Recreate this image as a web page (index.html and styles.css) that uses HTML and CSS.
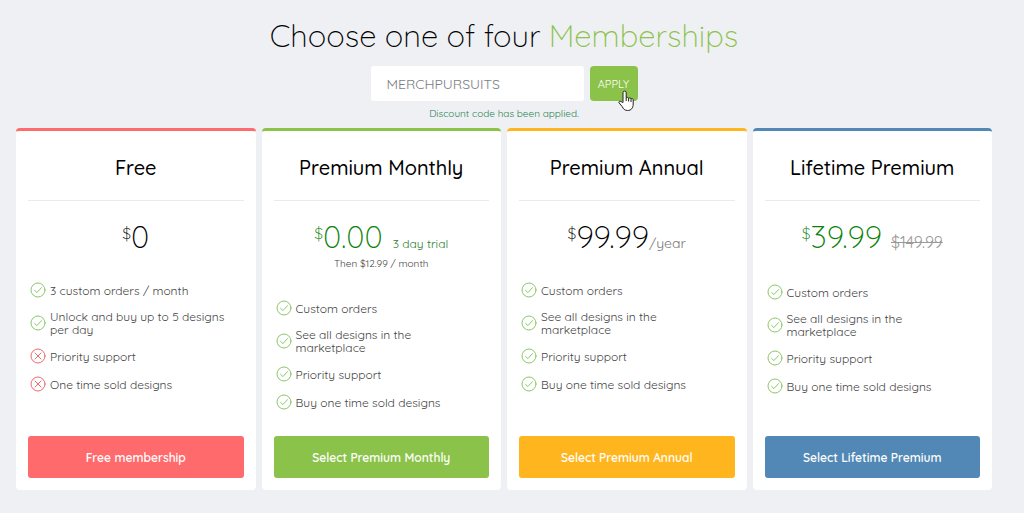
FILE: index.html
```html
<!DOCTYPE html>
<html lang="en">
<head>
  <meta charset="UTF-8" />
  <meta name="viewport" content="width=device-width, initial-scale=1.0"/>
  <title>Memberships</title>
  <link rel="stylesheet" href="styles.css">
</head>
<body>
  <svg class="sprite" aria-hidden="true">
    <symbol id="check" viewBox="0 0 16 16">
      <circle cx="8" cy="8" r="7" />
      <path d="M4.600 8.400l2.300 2.200 4.600-5" />
    </symbol>
    <symbol id="cross" viewBox="0 0 16 16">
      <circle cx="8" cy="8" r="7" />
      <path d="M5 5l6 6M11 5l-6 6" />
    </symbol>
  </svg>

  <h1>Choose one of four <span>Memberships</span></h1>

  <form class="discount">
    <input type="text" id="code" aria-label="Discount code" value="MERCHPURSUITS" />
    <div class="apply-wrap">
      <button type="button" class="apply">APPLY</button>
      <svg class="pointer" viewBox="0 0 16 22" aria-hidden="true">
        <path d="M5 12.500V2.700a1.600 1.600 0 0 1 3.200 0V8a1.300 1.300 0 0 1 2.400.5 1.300 1.300 0 0 1 2.400.6 1.200 1.200 0 0 1 2.200.8V14c0 4-2 6.500-5.600 6.500-3 0-4.300-1.600-5.300-3.800L1 12.800c-.6-1.300 1-2.200 2-1.200z" />
        <path d="M8.200 8v3M10.600 8.500V11.500M13 9.100V12" />
      </svg>
    </div>
  </form>
  <p class="message">Discount code has been applied.</p>

  <main class="plans">
    <section class="plan free">
      <h2>Free</h2>
      <div class="price"><sup>$</sup><span class="amount">0</span></div>
      <ul>
        <li><svg class="yes"><use href="#check" /></svg><span>3 custom orders / month</span></li>
        <li><svg class="yes"><use href="#check" /></svg><span>Unlock and buy up to 5 designs<br>per day</span></li>
        <li><svg class="no"><use href="#cross" /></svg><span>Priority support</span></li>
        <li><svg class="no"><use href="#cross" /></svg><span>One time sold designs</span></li>
      </ul>
      <button type="button">Free membership</button>
    </section>

    <section class="plan monthly">
      <h2>Premium Monthly</h2>
      <div class="price sale"><sup>$</sup><span class="amount">0.00</span><span class="trial">3 day trial</span></div>
      <p class="then">Then $12.99 / month</p>
      <ul>
        <li><svg class="yes"><use href="#check" /></svg><span>Custom orders</span></li>
        <li><svg class="yes"><use href="#check" /></svg><span>See all designs in the<br>marketplace</span></li>
        <li><svg class="yes"><use href="#check" /></svg><span>Priority support</span></li>
        <li><svg class="yes"><use href="#check" /></svg><span>Buy one time sold designs</span></li>
      </ul>
      <button type="button">Select Premium Monthly</button>
    </section>

    <section class="plan annual">
      <h2>Premium Annual</h2>
      <div class="price"><sup>$</sup><span class="amount">99.99</span><span class="period">/year</span></div>
      <ul>
        <li><svg class="yes"><use href="#check" /></svg><span>Custom orders</span></li>
        <li><svg class="yes"><use href="#check" /></svg><span>See all designs in the<br>marketplace</span></li>
        <li><svg class="yes"><use href="#check" /></svg><span>Priority support</span></li>
        <li><svg class="yes"><use href="#check" /></svg><span>Buy one time sold designs</span></li>
      </ul>
      <button type="button">Select Premium Annual</button>
    </section>

    <section class="plan lifetime">
      <h2>Lifetime Premium</h2>
      <div class="price sale"><sup>$</sup><span class="amount">39.99</span><del>$149.99</del></div>
      <ul>
        <li><svg class="yes"><use href="#check" /></svg><span>Custom orders</span></li>
        <li><svg class="yes"><use href="#check" /></svg><span>See all designs in the<br>marketplace</span></li>
        <li><svg class="yes"><use href="#check" /></svg><span>Priority support</span></li>
        <li><svg class="yes"><use href="#check" /></svg><span>Buy one time sold designs</span></li>
      </ul>
      <button type="button">Select Lifetime Premium</button>
    </section>
  </main>
</body>
</html>
```
FILE: styles.css
```css
* {
  box-sizing: border-box;
}
body {
  font-family: Quicksand, Lato, sans-serif;
  background: #eff0f4;
  color: #000;
  margin: 0;
  padding: 16px 32px 16px 16px;
}
.sprite {
  display: none;
}
h1 {
  margin: 0 0 10px;
  font-size: 31px;
  line-height: 40px;
  font-weight: 300;
  text-align: center;
}
h1 span {
  color: #8bc34a;
}
.discount {
  display: flex;
  justify-content: center;
  gap: 6px;
}
.discount input {
  width: 213px;
  height: 35px;
  padding: 0 16px;
  border: none;
  border-radius: 3px;
  background: #fff;
  color: #7b7e84;
  font-family: inherit;
  font-size: 14px;
}
.apply-wrap {
  position: relative;
}
.apply {
  width: 48px;
  height: 35px;
  padding: 0;
  border: none;
  border-radius: 4px;
  background: #8bc34a;
  color: #fff;
  font-family: inherit;
  font-size: 11px;
  cursor: pointer;
}
.pointer {
  position: absolute;
  left: 28px;
  top: 24px;
  width: 16px;
  height: 22px;
  fill: #fff;
  stroke: #222;
  stroke-linejoin: round;
}
.message {
  margin: 5px 0 6px;
  font-size: 10px;
  line-height: 16px;
  text-align: center;
  color: #2a854f;
}
.plans {
  display: grid;
  grid-template-columns: repeat(4, 1fr);
  gap: 6px;
}
.plan {
  display: flex;
  flex-direction: column;
  padding: 0 12px 12px;
  background: #fff;
  border-top: 3px solid;
  border-radius: 4px;
}
h2 {
  margin: 0;
  padding: 24px 0 19px;
  border-bottom: 1px solid #eaeaea;
  font-size: 20px;
  line-height: 26px;
  font-weight: 500;
  text-align: center;
  color: #000;
}
.price {
  display: flex;
  justify-content: center;
  align-items: baseline;
  height: 36px;
  margin-top: 18px;
  line-height: 36px;
  color: #000;
}
.price sup {
  align-self: flex-start;
  font-size: 16px;
  line-height: 28px;
  font-weight: 300;
}
.amount {
  font-size: 31px;
  font-weight: 300;
}
.sale {
  color: #0a820a;
}
.trial {
  margin-left: 10px;
  font-size: 12px;
  color: #2a7f2e;
}
.period {
  font-size: 14px;
  color: #777;
}
.price del {
  margin-left: 9px;
  font-size: 16px;
  color: #999;
}
.then {
  margin: 0;
  font-size: 10px;
  line-height: 18px;
  text-align: center;
  color: #444;
}
ul {
  list-style: none;
  margin: 21px 0 20px;
  padding: 0 2px;
}
.lifetime ul {
  margin-top: 23px;
}
li {
  display: flex;
  align-items: center;
  gap: 4px;
  padding: 6px 0;
  font-size: 12px;
  line-height: 13px;
  color: #444;
}
li svg {
  flex: none;
  width: 16px;
  height: 16px;
  fill: none;
  stroke-linecap: round;
  stroke-linejoin: round;
}
.yes {
  stroke: #8bc766;
}
.no {
  stroke: #f0696d;
}
.plan button {
  height: 42px;
  margin-top: auto;
  border: none;
  border-radius: 3px;
  color: #fff;
  font-family: inherit;
  font-size: 12px;
  font-weight: 600;
  cursor: pointer;
}
.free {
  border-color: #ff6b6d;
}
.free button {
  background: #ff6b6d;
}
.monthly {
  border-color: #8bc34a;
}
.monthly button {
  background: #8bc34a;
}
.annual {
  border-color: #ffb61e;
}
.annual button {
  background: #ffb61e;
}
.lifetime {
  border-color: #5288b5;
}
.lifetime button {
  background: #5288b5;
}
```
